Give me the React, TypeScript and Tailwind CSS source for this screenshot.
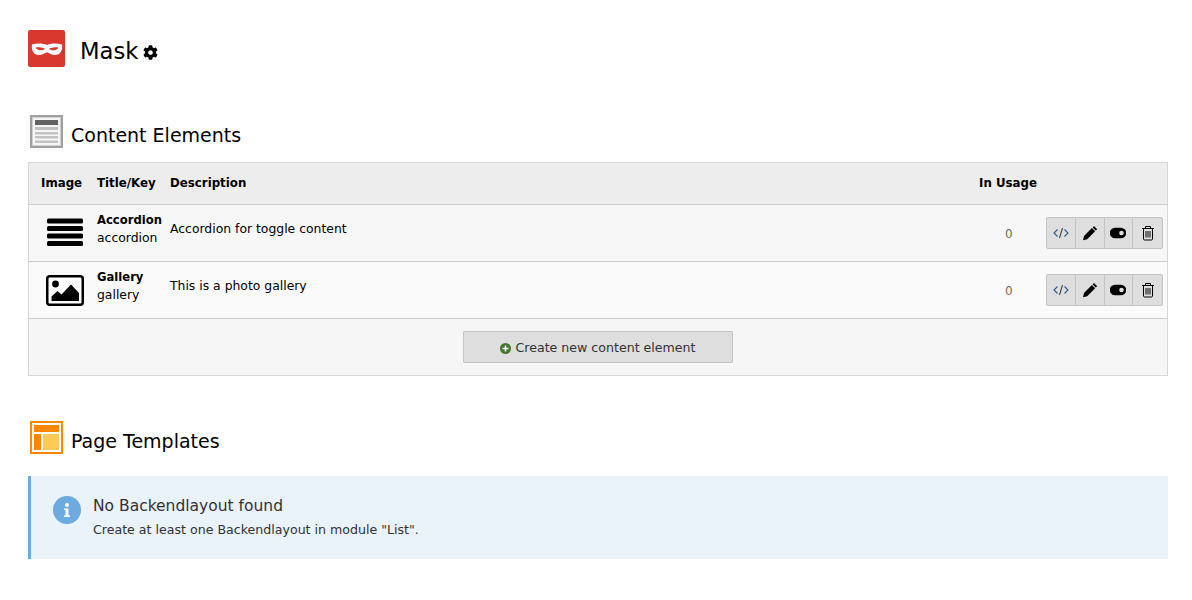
import React from "react";
import { FaCog } from "react-icons/fa";

const font = "font-['DejaVu_Sans',Verdana,sans-serif]";

function MaskLogo() {
  return (
    <div className="flex h-[37px] w-[37px] items-center justify-center rounded-[2px] bg-[#d9382f]">
      <svg width="32" height="14" viewBox="0 0 32 14">
        <path
          fill="#fff"
          fillRule="evenodd"
          d="M1 2.500 C7 1 12 1.500 16 3 C20 1.500 25 1 31 2.500 C32 8 29.500 13 24 13 C20 13 18 10.500 16 10.500 C14 10.500 12 13 8 13 C2.500 13 0 8 1 2.500 Z M4.500 5.500 C6 8.500 11 9.500 14 6.800 C11 5.500 8 5 4.500 5.500 Z M18 6.800 C21 9.500 26 8.500 27.500 5.500 C24 5 21 5.500 18 6.800 Z"
        />
      </svg>
    </div>
  );
}

function ContentIcon() {
  return (
    <svg width="33" height="33" viewBox="0 0 33 33">
      <rect x="0" y="0" width="33" height="33" fill="#a0a0a0" />
      <rect x="2" y="2" width="29" height="29" fill="#d0d0d0" />
      <rect x="3" y="3" width="27" height="27" fill="#f6f6f6" />
      <rect x="5" y="5" width="23" height="5" fill="#636363" />
      <rect x="5" y="12" width="23" height="3" fill="#c2c2c2" />
      <rect x="5" y="17" width="23" height="2.500" fill="#c2c2c2" />
      <rect x="5" y="21" width="23" height="2.500" fill="#c2c2c2" />
      <rect x="5" y="25.500" width="23" height="2.500" fill="#c2c2c2" />
    </svg>
  );
}

function TemplateIcon() {
  return (
    <svg width="33" height="33" viewBox="0 0 33 33">
      <rect x="0" y="0" width="33" height="33" fill="#ff8700" />
      <rect x="2" y="2" width="29" height="29" fill="#fff" />
      <rect x="4" y="4" width="25" height="7" fill="#ff8700" />
      <rect x="4" y="13" width="7" height="16" fill="#ff8700" />
      <rect x="13" y="13" width="16" height="16" fill="#ffc857" />
    </svg>
  );
}

function AccordionIcon() {
  return (
    <svg width="36" height="29" viewBox="0 0 36 29">
      <rect x="0" y="0.500" width="36" height="5" rx="1.500" fill="#000" />
      <rect x="0" y="8" width="36" height="5" rx="1.500" fill="#000" />
      <rect x="0" y="15.500" width="36" height="5" rx="1.500" fill="#000" />
      <rect x="0" y="23" width="36" height="5" rx="1.500" fill="#000" />
    </svg>
  );
}

function GalleryIcon() {
  return (
    <svg width="38" height="31" viewBox="0 0 38 31">
      <rect x="1.250" y="1.250" width="35.500" height="28.500" rx="2.500" fill="#fff" stroke="#000" strokeWidth="2.500" />
      <circle cx="9.500" cy="9" r="3.400" fill="#000" />
      <path d="M5.500 26 V21.500 L11.500 16 L15.500 19.500 L25 9.500 L33 18 V26 Z" fill="#000" />
    </svg>
  );
}

function CodeIcon() {
  return (
    <svg width="16" height="16" viewBox="0 0 16 16" fill="none" stroke="#2b5a93" strokeWidth="1.100">
      <path d="M4.500 4.500 L1 8 L4.500 11.500" />
      <path d="M11.500 4.500 L15 8 L11.500 11.500" />
      <path d="M9.500 3 L6.500 13" stroke="#444" />
    </svg>
  );
}

function PencilIcon() {
  return (
    <svg width="16" height="16" viewBox="0 0 16 16">
      <path fill="#000" d="M12 1 L15.200 4.200 L13.800 5.600 L10.600 2.400 Z M9.900 3.100 L13.100 6.300 L5.200 14.200 L1 15.200 L2 11 Z" />
    </svg>
  );
}

function ToggleIcon() {
  return (
    <svg width="16" height="16" viewBox="0 0 16 16">
      <path
        fill="#000"
        fillRule="evenodd"
        d="M5 2.800h6a5.200 5.200 0 0 1 0 10.400h-6a5.200 5.200 0 0 1 0-10.400z M11.500 5.700a2.300 2.300 0 1 0 0 4.600a2.300 2.300 0 1 0 0-4.600z"
      />
    </svg>
  );
}

function TrashIcon() {
  return (
    <svg width="16" height="16" viewBox="0 0 16 16" fill="none" stroke="#000" strokeWidth="1">
      <path d="M2 3.500H14" />
      <path d="M5.500 3.500V1.500H10.500V3.500" />
      <path d="M3.500 3.500V14C3.500 14.500 4 15 4.500 15H11.500C12 15 12.500 14.500 12.500 14V3.500" />
      <path d="M6 6V12.500M8 6V12.500M10 6V12.500" />
    </svg>
  );
}

function Actions() {
  const cell = "flex h-full w-[29px] items-center justify-center";
  return (
    <div className="flex h-[32px] w-[117px] divide-x divide-[#c4c4c4] rounded-[2px] border border-[#c4c4c4] bg-[#dedede]">
      <span className={cell}><CodeIcon /></span>
      <span className={cell}><PencilIcon /></span>
      <span className={cell}><ToggleIcon /></span>
      <span className={cell}><TrashIcon /></span>
    </div>
  );
}

function Row({ icon, title, itemKey, description, bg, iconClass }: { icon: React.ReactNode; title: string; itemKey: string; description: string; bg: string; iconClass: string }) {
  return (
    <div className={`flex h-[57px] items-center border-b border-[#cccccc] ${bg}`}>
      <div className={`flex w-[68px] shrink-0 justify-center pl-[3px] ${iconClass}`}>{icon}</div>
      <div className="w-[73px] shrink-0 pb-[9px] leading-[18px] text-black">
        <div className="text-[11.6px] font-bold">{title}</div>
        <div className="text-[12.4px]">{itemKey}</div>
      </div>
      <div className="flex-1 pb-[9px] text-[12.4px] leading-[18px] text-black">{description}</div>
      <div className="w-[76px] shrink-0 pl-[35px] pt-[2px] text-[12px] text-[#7a6a55]">0</div>
      <div className="w-[121px] shrink-0"><Actions /></div>
    </div>
  );
}

export default function App() {
  return (
    <div className={`min-h-[600px] bg-white pb-[41px] pl-[28px] pr-[24px] pt-[30px] ${font}`}>
      <header className="flex items-start">
        <MaskLogo />
        <h1 className="ml-[15px] mt-[5px] text-[22.7px] leading-[32px] text-black">Mask</h1>
        <span className="ml-[5px] mt-[15px]"><FaCog size={15} color="#000" /></span>
      </header>

      <section className="mt-[48px]">
        <div className="flex items-start pl-[2px]">
          <ContentIcon />
          <h2 className="ml-[8px] pt-[8px] text-[19px] leading-[25px] text-black">Content Elements</h2>
        </div>
        <div className="mt-[14px] border border-[#d7d7d7]">
          <div className="flex h-[42px] items-center border-b border-[#cccccc] bg-[#ededed] pt-[1px] text-[11.8px] font-bold text-black">
            <div className="w-[68px] shrink-0 pl-[12px]">Image</div>
            <div className="w-[73px] shrink-0">Title/Key</div>
            <div className="flex-1">Description</div>
            <div className="w-[188px] shrink-0">In Usage</div>
          </div>
          <Row icon={<AccordionIcon />} iconClass="mb-[2px]" title="Accordion" itemKey="accordion" description="Accordion for toggle content" bg="bg-[#f7f7f7]" />
          <Row icon={<GalleryIcon />} iconClass="" title="Gallery" itemKey="gallery" description="This is a photo gallery" bg="bg-[#fafafa]" />
          <div className="flex h-[56px] items-center justify-center bg-[#f6f6f6]">
            <button className="flex h-[32px] w-[270px] items-center justify-center rounded-[1px] border border-[#c4c4c4] bg-[#dedede] pt-[2px] text-[12.6px] text-[#333333]">
              <svg width="11" height="11" viewBox="0 0 11 11" className="mr-[4px]">
                <circle cx="5.500" cy="5.500" r="5.500" fill="#47752f" />
                <path d="M5.500 2.500v6M2.500 5.500h6" stroke="#fff" strokeWidth="1.600" />
              </svg>
              Create new content element
            </button>
          </div>
        </div>
      </section>

      <section className="mt-[45px]">
        <div className="flex items-start pl-[2px]">
          <TemplateIcon />
          <h2 className="ml-[8px] pt-[8px] text-[19px] leading-[25px] text-black">Page Templates</h2>
        </div>
        <div className="mt-[22px] flex h-[83px] border-l-[3px] border-[#6daae0] bg-[#eaf2fa] pl-[22px] pt-[19px]">
          <svg width="28" height="28" viewBox="0 0 28 28" className="mt-[1px] shrink-0">
            <circle cx="14" cy="14" r="14" fill="#6daae0" />
            <circle cx="14" cy="9" r="2" fill="#fff" />
            <path d="M11 12.500h4.500v7H17v1.500h-6v-1.500h1.500v-5.500H11z" fill="#fff" />
          </svg>
          <div className="ml-[12px] text-[#333333]">
            <div className="pt-[1px] text-[15.5px] leading-[20px]">No Backendlayout found</div>
            <div className="mt-[5px] text-[12.6px] leading-[18px]">Create at least one Backendlayout in module "List".</div>
          </div>
        </div>
      </section>
    </div>
  );
}
